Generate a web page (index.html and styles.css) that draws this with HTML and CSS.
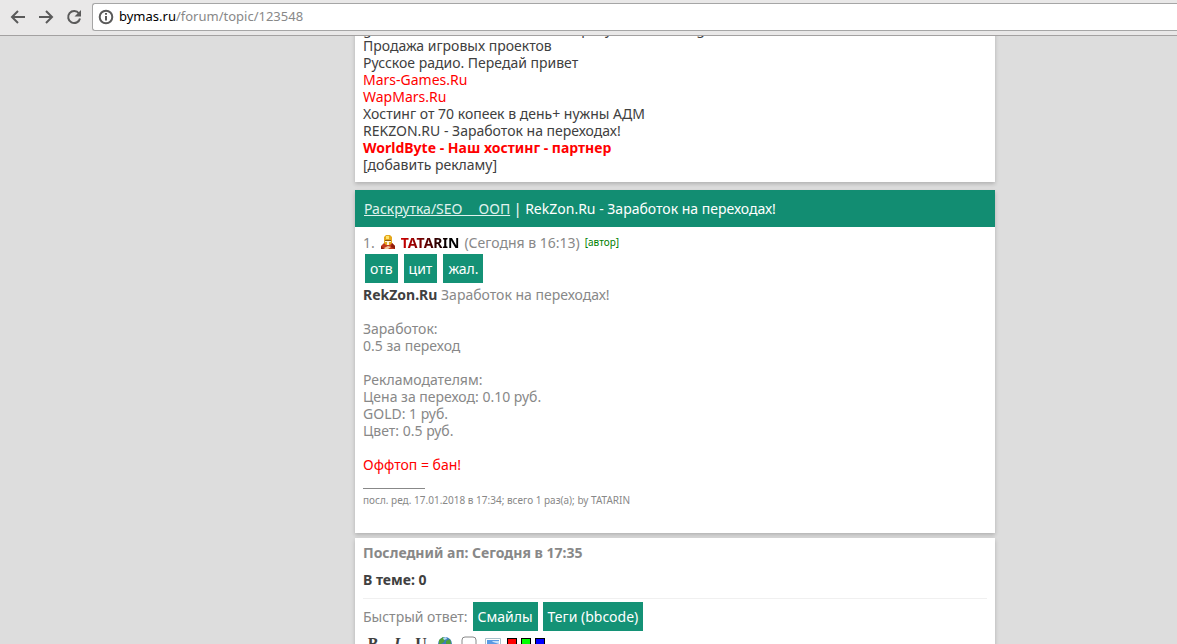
FILE: index.html
```html
<!DOCTYPE html>
<html lang="ru">

<head>
    <meta charset="UTF-8">
    <meta name="viewport" content="width=device-width, initial-scale=1.0">
    <title>RekZon.Ru - Заработок на переходах!</title>
    <link rel="stylesheet" href="styles.css">
</head>

<body>
    <!-- Browser toolbar -->
    <header class="browser-bar">
        <button class="nav-button" type="button" aria-label="Назад">
            <svg width="16" height="16" viewBox="0 0 16 16"><path d="M15 8H2M8 2L2 8l6 6" /></svg>
        </button>
        <button class="nav-button" type="button" aria-label="Вперёд">
            <svg width="16" height="16" viewBox="0 0 16 16"><path d="M1 8h13M8 2l6 6-6 6" /></svg>
        </button>
        <button class="nav-button" type="button" aria-label="Обновить">
            <svg width="16" height="16" viewBox="0 0 16 16"><path d="M13 4.5A6 6 0 1 0 14 9.5" /><path class="fill" d="M15 1v6.500H8.500z" /></svg>
        </button>
        <div class="address">
            <svg class="info" width="16" height="16" viewBox="0 0 16 16"><circle cx="8" cy="8" r="6.300" /><path d="M8 7v4.500M8 4v1.800" /></svg>
            <a href="#"><span class="host">bymas.ru</span>/forum/topic/123548</a>
        </div>
    </header>

    <main class="page">
        <!-- Advertising links -->
        <section class="card ads">
            <a href="#">game-mars.ru - новая онлайн игра, удобный biling</a>
            <a href="#">Продажа игровых проектов</a>
            <a href="#">Русское радио. Передай привет</a>
            <a href="#" class="red">Mars-Games.Ru</a>
            <a href="#" class="red">WapMars.Ru</a>
            <a href="#">Хостинг от 70 копеек в день+ нужны АДМ</a>
            <a href="#">REKZON.RU - Заработок на переходах!</a>
            <a href="#" class="red"><b>WorldByte - Наш хостинг - партнер</b></a>
            <a href="#">[добавить рекламу]</a>
        </section>

        <!-- Topic -->
        <section class="card topic">
            <h1 class="title"><a href="#">Раскрутка/SEO __ООП</a> | RekZon.Ru - Заработок на переходах!</h1>
            <article class="post">
                <div class="author">
                    <span>1.</span>
                    <svg class="avatar" width="16" height="16" viewBox="0 0 16 16">
                        <path fill="#c23a1c" d="M1 15v-3l3-3h8l3 3v3z" />
                        <path fill="#8d1c0a" d="M1 12l3 3H1zM12 9l3 3v3l-4-2z" />
                        <path fill="#f3c9a0" d="M4 14l4-2 3 1-3 2H5z" />
                        <path fill="#e3a71c" d="M4 3l2-2h4l2 2v6l-2 2H6L4 9z" />
                        <path fill="#ffe36a" d="M6 2h3v3H6z" />
                        <path fill="#fff3d8" d="M5 6h6v2H9v3H7V8H5z" />
                        <path fill="#8a5a10" d="M5 6h6v1H5z" />
                    </svg>
                    <a href="#" class="nick">TATARIN</a>
                    <span>(Сегодня в 16:13)</span>
                    <span class="mark">[автор]</span>
                </div>
                <div class="actions">
                    <button class="button" type="button">отв</button>
                    <button class="button" type="button">цит</button>
                    <button class="button" type="button">жал.</button>
                </div>
                <p class="text"><b>RekZon.Ru</b> Заработок на переходах!<br>
                    <br>
                    Заработок:<br>
                    0.5 за переход<br>
                    <br>
                    Рекламодателям:<br>
                    Цена за переход: 0.10 руб.<br>
                    GOLD: 1 руб.<br>
                    Цвет: 0.5 руб.<br>
                    <br>
                    <span class="red">Оффтоп = бан!</span></p>
                <div class="edited">посл. ред. 17.01.2018 в 17:34; всего 1 раз(а); by TATARIN</div>
            </article>
        </section>

        <!-- Quick reply -->
        <section class="card reply">
            <div class="last-up">Последний ап: Сегодня в 17:35</div>
            <div class="online">В теме: 0</div>
            <div class="actions quick">
                <span>Быстрый ответ:</span>
                <button class="button" type="button">Смайлы</button>
                <button class="button" type="button">Теги (bbcode)</button>
            </div>
            <div class="editor">
                <button type="button"><b>B</b></button>
                <button type="button"><b><i>I</i></b></button>
                <button type="button"><b><u>U</u></b></button>
                <button type="button" aria-label="Ссылка">
                    <svg width="16" height="16" viewBox="0 0 16 16"><circle cx="8" cy="8" r="7" fill="#3c7dbd" /><path fill="#4fa03a" d="M2 4l4-3 2 2-1 3-3 2-2 2zM9 5l4-2 1 4-2 4-3-3z" /><path fill="#b8dcf4" d="M6 2l3-1 1 2-3 1z" /></svg>
                </button>
                <button type="button" aria-label="Цитата">
                    <svg width="16" height="16" viewBox="0 0 16 16"><rect x="1" y="1" width="14" height="12" rx="3" fill="#fff" stroke="#888" /></svg>
                </button>
                <button type="button" aria-label="Картинка">
                    <svg width="16" height="16" viewBox="0 0 16 16"><path fill="#fff" stroke="#a9c0cb" d="M.5 2.500h15v12H.5z" /><path fill="#5a9be5" d="M2 4h12v9H2z" /><path fill="#c5e2fb" d="M7 5h7v3L8 6z" /></svg>
                </button>
                <button type="button" class="color c-red" aria-label="Красный"></button>
                <button type="button" class="color c-green" aria-label="Зелёный"></button>
                <button type="button" class="color c-blue" aria-label="Синий"></button>
            </div>
        </section>
    </main>
</body>

</html>
```
FILE: styles.css
```css
* {
    box-sizing: border-box;
}

body {
    display: flex;
    flex-direction: column;
    height: 100vh;
    margin: 0;
    overflow: hidden;
    background-color: #ddd;
    color: #888;
    font: 14px/17px Tahoma, "Noto Sans", sans-serif;
}

a {
    color: #404040;
    text-decoration: none;
}

b {
    color: #404040;
}

button {
    font: inherit;
    border: 0;
    cursor: pointer;
}

.red,
.red b {
    color: #f00;
}

/* Browser toolbar, stays above the scrolled page */
.browser-bar {
    position: relative;
    z-index: 1;
    display: flex;
    flex: none;
    align-items: center;
    gap: 12px;
    height: 36px;
    padding: 0 0 2px 10px;
    border-bottom: 1px solid #a3a1a1;
    background-color: #e9e8e8;
}

.nav-button {
    display: flex;
    padding: 0;
    background: none;
}

.browser-bar svg {
    fill: none;
    stroke: #5a5a5a;
    stroke-width: 2;
}

.browser-bar .fill {
    fill: #5a5a5a;
    stroke: none;
}

.address {
    display: flex;
    flex: 1;
    align-items: center;
    gap: 5px;
    height: 28px;
    margin-left: -2px;
    padding-left: 5px;
    border: 1px solid #a6a6a6;
    border-right: 0;
    border-radius: 3px 0 0 3px;
    background-color: #fff;
    font-size: 13px;
}

.address a {
    color: #888;
}

.address .host {
    color: #000;
}

/* Site column */
.page {
    flex: 1;
    min-height: 0;
    width: 640px;
    margin-left: 355px;
}

.card {
    background-color: #fff;
    box-shadow: 0 2px 4px rgba(0, 0, 0, .2);
}

.ads {
    display: flex;
    flex-direction: column;
    margin-top: -16px;
    margin-bottom: 8px;
    padding: 0 8px 9px;
}

.topic {
    margin-bottom: 5px;
}

.title {
    margin: 0;
    padding: 10px 9px;
    background-color: #128d72;
    color: #fff;
    font-size: 14px;
    font-weight: normal;
}

.title a {
    color: #e0f2ee;
    text-decoration: underline;
}

.post {
    padding: 6px 8px 24px;
}

.author {
    display: flex;
    align-items: center;
    gap: 5px;
    height: 18px;
}

.nick {
    background: linear-gradient(90deg, #d00000, #000 80%);
    background-clip: text;
    color: transparent;
    font-weight: bold;
}

.mark {
    color: #008000;
    font-size: 10px;
}

.actions {
    display: flex;
    align-items: center;
    gap: 6px;
    padding: 3px 2px;
}

.button {
    padding: 6px 5px;
    background-color: #149276;
    color: #fff;
}

.text {
    margin: 0;
}

.edited {
    margin-top: 15px;
    font-size: 10px;
}

/* Short rule above the edit note */
.edited::before {
    content: "";
    display: block;
    width: 62px;
    margin-bottom: 3px;
    border-top: 1px solid #888;
}

.reply {
    padding: 6px 8px;
}

.last-up {
    font-weight: bold;
}

.online {
    padding: 10px 0;
    border-bottom: 1px solid #f0f0f0;
    color: #404040;
    font-weight: bold;
}

.quick {
    gap: 5px;
    padding: 3px 0;
}

.editor {
    display: flex;
    align-items: center;
    gap: 4px;
    padding: 1px 0;
}

.editor button {
    display: flex;
    justify-content: center;
    width: 20px;
    padding: 0;
    background: none;
    font-family: "Liberation Serif", serif;
    font-size: 16px;
}

.editor .color {
    width: 10px;
    height: 11px;
    border: 1px solid #000;
}

.editor .c-red {
    background-color: #f00;
}

.editor .c-green {
    background-color: #0f0;
}

.editor .c-blue {
    background-color: #00f;
}
```
